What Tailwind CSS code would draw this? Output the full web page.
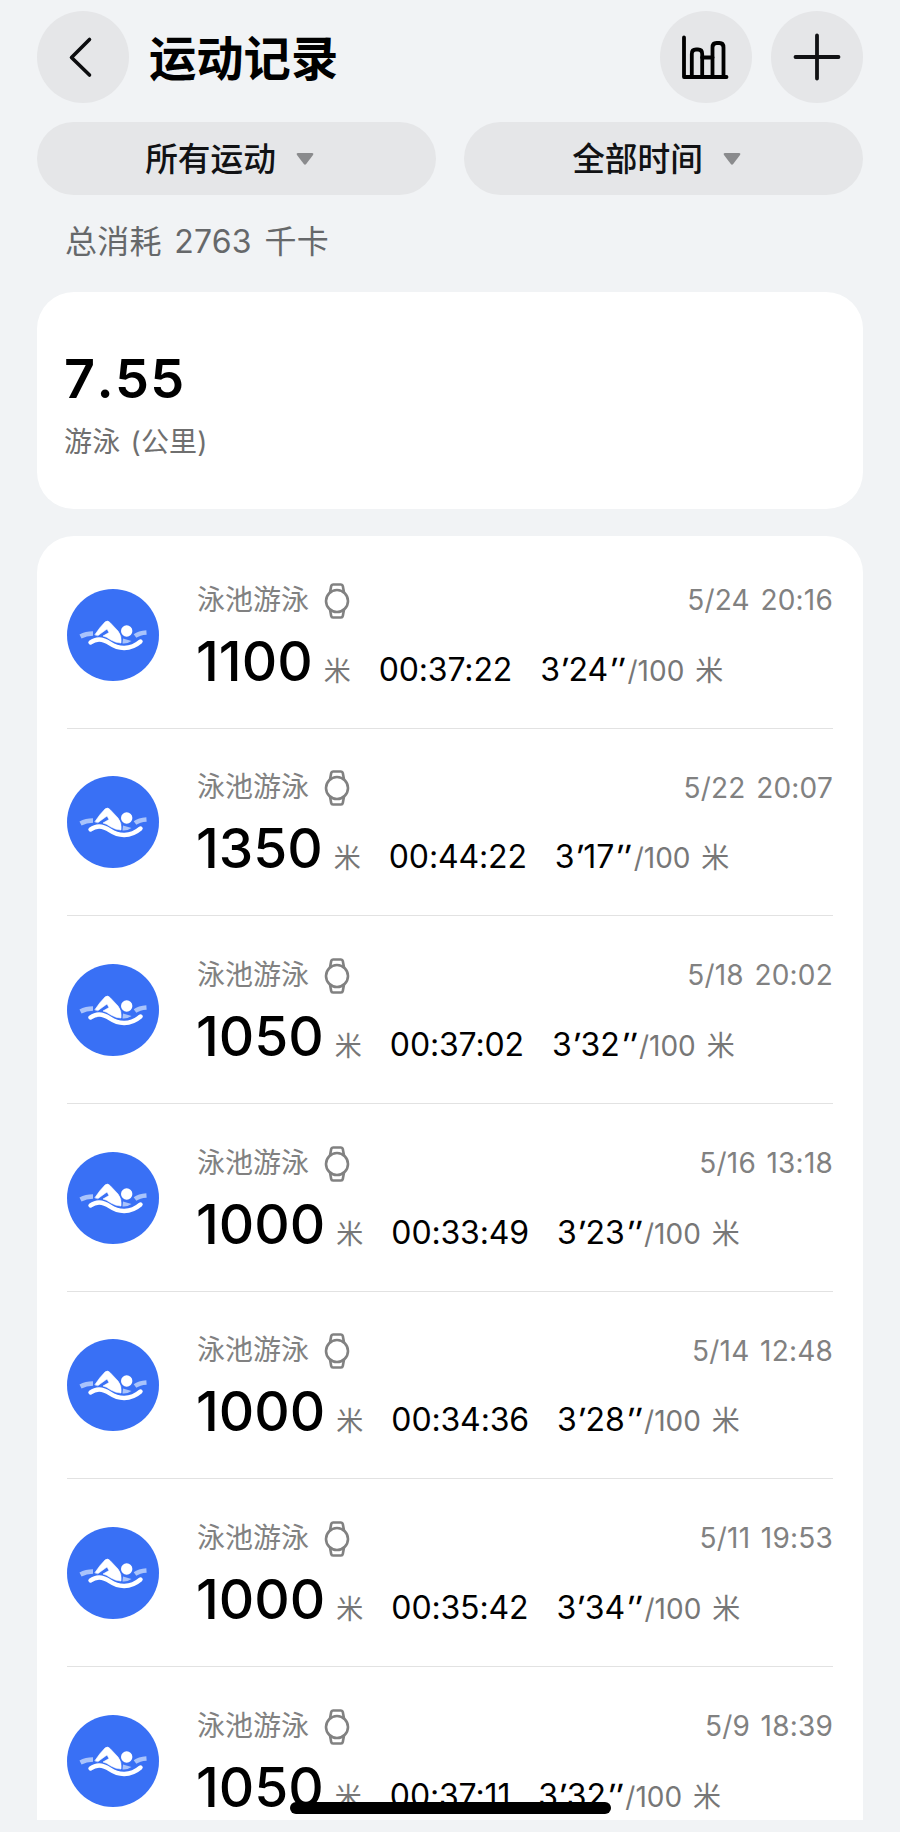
<!DOCTYPE html>
<html lang="zh-CN">
<head>
  <meta charset="UTF-8" />
  <meta name="viewport" content="width=device-width, initial-scale=1.0"/>
  <title>运动记录</title>
  <script src="https://cdn.jsdelivr.net/npm/@tailwindcss/browser@4"></script>
  <style>
    body { font-family: 'Inter', 'Noto Sans CJK SC', sans-serif; }
  </style>
</head>
<body class="bg-[#f1f3f5] text-black h-[1832px] overflow-hidden px-[37px] pt-[11px] pb-3 flex flex-col">

  <header class="flex items-center h-[91px] shrink-0">
    <button class="size-[92px] shrink-0 rounded-full bg-[#e5e6e8] flex items-center justify-center">
      <svg class="ml-1" width="40" height="46" viewBox="0 0 40 46" fill="none" stroke="#0c0d0f" stroke-width="3.6" stroke-linecap="round" stroke-linejoin="round">
        <path d="M24.500 5.500 L6.500 23.500 L24.500 41" />
      </svg>
    </button>
    <h1 class="ml-5 mt-1 text-[47.3px] leading-none font-bold">运动记录</h1>
    <div class="ml-auto flex gap-[19px]">
      <button class="size-[92px] rounded-full bg-[#e5e6e8] flex items-center justify-center">
        <svg width="52" height="52" viewBox="0 0 52 52" fill="none" stroke="#000" stroke-width="3.8" stroke-linecap="round" stroke-linejoin="round">
          <path d="M4 6.500 V46 H46.500" />
          <path d="M11.800 46 V23 Q11.800 18.500 16 18.500 H18 Q22.200 18.500 22.200 23 V46" />
          <path d="M22.200 26.500 H32.500" />
          <path d="M32.500 46 V16.500 Q32.500 12 36.500 12 H39.500 Q43.500 12 43.500 16.500 V46" />
        </svg>
      </button>
      <button class="size-[92px] rounded-full bg-[#e5e6e8] flex items-center justify-center">
        <svg width="48" height="48" viewBox="0 0 48 48" fill="none" stroke="#111214" stroke-width="3.8" stroke-linecap="round">
          <path d="M24 2.500 V45.500 M2.500 24 H45.500" />
        </svg>
      </button>
    </div>
  </header>

  <!-- Filtros -->
  <div class="mt-[20px] grid grid-cols-2 gap-7 shrink-0">
    <button class="h-[73px] rounded-full bg-[#e5e6e8] flex items-center justify-center gap-5 text-[32.7px] font-medium text-[#111214] pr-3.5">
      <span class="mt-0.5">所有运动</span>
      <svg width="18" height="14" viewBox="0 0 18 14" fill="#8a8b8d"><path d="M2 1 H16 Q18 1 17 3 L10.200 12 Q9 13.500 7.800 12 L1 3 Q0 1 2 1 Z" /></svg>
    </button>
    <button class="h-[73px] rounded-full bg-[#e5e6e8] flex items-center justify-center gap-5 text-[32.7px] font-medium text-[#111214] pr-3.5">
      <span class="mt-0.5">全部时间</span>
      <svg width="18" height="14" viewBox="0 0 18 14" fill="#8a8b8d"><path d="M2 1 H16 Q18 1 17 3 L10.200 12 Q9 13.500 7.800 12 L1 3 Q0 1 2 1 Z" /></svg>
    </button>
  </div>

  <p class="mt-[23px] pl-7 h-12 leading-[48px] text-[32px] tracking-[0.2px] [word-spacing:3.500px] text-[#66686a] shrink-0">总消耗 2763 千卡</p>

  <section class="mt-[26px] h-[217px] shrink-0 rounded-[37px] bg-white pl-7 pt-[56px]">
    <p class="-ml-px text-[54px] leading-[62px] font-semibold tracking-[1.3px] [font-kerning:none]">7.55</p>
    <p class="mt-3 -ml-px text-[28px] leading-10 tracking-[0.2px] [word-spacing:2px] text-[#6f6f6f]">游泳 (公里)</p>
  </section>

  <section class="mt-[27px] flex-1 min-h-0 overflow-hidden rounded-t-[37px] bg-white px-[30px] pt-[5px]">
    <div id="lista" class="divide-y-[1.5px] divide-[#e2e2e2]"></div>
  </section>

  <!-- home indicator -->
  <div class="absolute left-[290px] top-[1802px] w-[321px] h-[12px] rounded-full bg-black"></div>

  <script>
    const registros = [
      { metros: 1100, tempo: '00:37:22', min: 3, seg: '24', data: '5/24 20:16' },
      { metros: 1350, tempo: '00:44:22', min: 3, seg: '17', data: '5/22 20:07' },
      { metros: 1050, tempo: '00:37:02', min: 3, seg: '32', data: '5/18 20:02' },
      { metros: 1000, tempo: '00:33:49', min: 3, seg: '23', data: '5/16 13:18' },
      { metros: 1000, tempo: '00:34:36', min: 3, seg: '28', data: '5/14 12:48' },
      { metros: 1000, tempo: '00:35:42', min: 3, seg: '34', data: '5/11 19:53' },
      { metros: 1050, tempo: '00:37:11', min: 3, seg: '32', data: '5/9 18:39' }
    ];

    const container = document.getElementById('lista');

    registros.forEach(r => {
      const linha = document.createElement('div');
      linha.className = 'h-[187.7px] pt-[47.5px] flex items-start';
      linha.innerHTML = `
        <svg class="size-[92px] shrink-0" viewBox="0 0 92 92" fill="none" stroke-linecap="round" stroke-linejoin="round">
          <circle cx="46" cy="46" r="46" fill="#3970f5" />
          <path d="M13.500 47.500 Q19 44.500 26 44.500" stroke="#a9c3fb" stroke-width="4.400" stroke-linecap="butt" />
          <path d="M68 47 Q72 44 79.500 43.500" stroke="#a9c3fb" stroke-width="4.400" stroke-linecap="butt" />
          <path d="M56 49.500 L64.500 52 Q60 55 55.500 54.500 Z" fill="#a9c3fb" />
          <path d="M28 45.500 Q33 38 38 33 Q40.500 31 43 33.500 L51 42 Q55 47 54 54 Q49 54 44 51 Q39 47.500 36 47 L42 43.500 L40 40 L31 46.500 Z" fill="#fff" stroke="#fff" stroke-width="0.6" />
          <circle cx="59.700" cy="42" r="5.700" fill="#fff" />
          <path d="M23.500 53.500 C30 48.500 36 49.500 43 54.500 C51 60 63 61.500 73.500 52.500" stroke="#fff" stroke-width="4.400" />
        </svg>
        <div class="flex-1 ml-[38px] -mt-[9px]">
          <div class="flex items-center h-10 text-[28px] text-[#818181]">
            <span>泳池游泳</span>
            <svg class="ml-[15px] mt-0.5" width="26" height="36" viewBox="0 0 26 36" fill="none" stroke="#818181" stroke-width="2.600" stroke-linejoin="round">
              <circle cx="13" cy="18" r="11" />
              <path d="M6 9.500 L7.200 3 Q7.500 1.500 9 1.500 H17 Q18.500 1.500 18.800 3 L20 9.500 M6 26.500 L7.200 33 Q7.500 34.500 9 34.500 H17 Q18.500 34.500 18.800 33 L20 26.500" />
            </svg>
            <span class="ml-auto mt-px tracking-[0.2px] [word-spacing:2.500px]">${r.data}</span>
          </div>
          <div class="flex items-baseline h-[66px] mt-2 leading-[66px] whitespace-nowrap">
            <span class="-ml-px text-[55px] font-medium">${r.metros}</span>
            <span class="ml-[11px] text-[27px] text-[#777]">米</span>
            <span class="ml-7 text-[32px] tracking-[-0.15px]">${r.tempo}</span>
            <span class="ml-7 text-[32px]">${r.min}<span class="inline-block font-medium -skew-x-6 ml-px">′</span>${r.seg}<span class="inline-block font-medium -skew-x-6 ml-0.5 mr-0.5">″</span></span>
            <span class="text-[28px] text-[#777] [word-spacing:3px]">/100 米</span>
          </div>
        </div>
      `;
      container.appendChild(linha);
    });
  </script>
</body>
</html>
